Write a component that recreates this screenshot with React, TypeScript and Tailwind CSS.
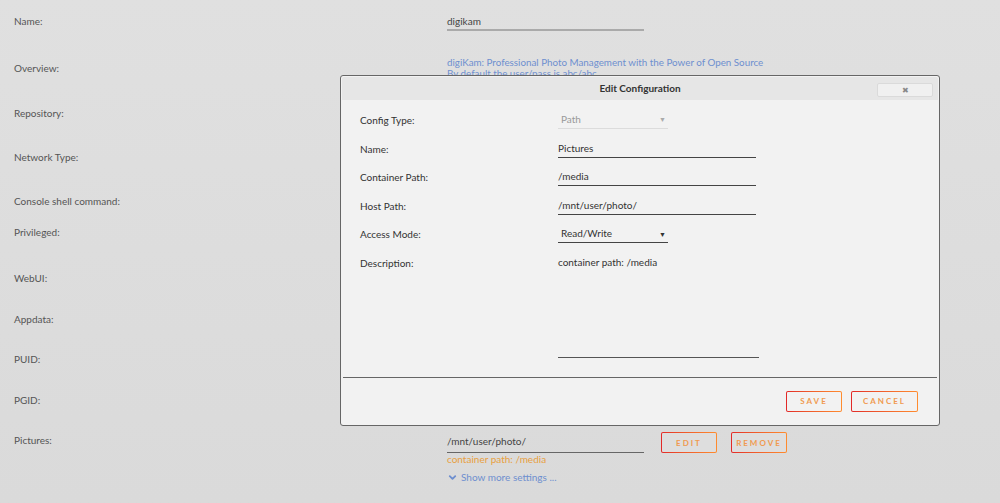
import { ChevronDown } from 'lucide-react';

const font = { fontFamily: 'Lato, "Liberation Sans", sans-serif' };

const rows: { label: string; h: string }[] = [
  { label: 'Repository:', h: 'h-[44px]' },
  { label: 'Network Type:', h: 'h-[44px]' },
  { label: 'Console shell command:', h: 'h-[31px]' },
  { label: 'Privileged:', h: 'h-[46px]' },
  { label: 'WebUI:', h: 'h-[41px]' },
  { label: 'Appdata:', h: 'h-[40px]' },
  { label: 'PUID:', h: 'h-[41px]' },
  { label: 'PGID:', h: 'h-[40px]' },
];

function OutlineButton({ label, width, bg }: { label: string; width: string; bg: string }) {
  return (
    <div
      className={`p-px rounded-[2px] bg-linear-to-r from-[#e22828] to-[#ff8c2f] ${width} h-[21px]`}
    >
      <div className={`w-full h-full flex items-center justify-center rounded-[1px] ${bg}`}>
        <span className="text-[8px] font-bold tracking-[2px] text-[#f09a50]">{label}</span>
      </div>
    </div>
  );
}

function ModalRow({ label, children }: { label: string; children: React.ReactNode }) {
  return (
    <div className="flex h-[28.6px]">
      <div className="w-[198px] pt-[2px] text-[10px] text-[#333]">{label}</div>
      <div className="flex-1">{children}</div>
    </div>
  );
}

function TextInput({ value }: { value: string }) {
  return (
    <div className="w-[198px] h-[18px] border-b border-[#444] text-[10px] text-[#333] leading-[16px]">
      {value}
    </div>
  );
}

function Select({ value, disabled }: { value: string; disabled?: boolean }) {
  return (
    <div
      className={`w-[110px] h-[18px] flex items-center justify-between pl-[3px] pr-[2px] border-b text-[10px] ${
        disabled ? 'border-[#dcdcdc] text-[#999]' : 'border-[#444] text-[#333]'
      }`}
    >
      <span>{value}</span>
      <span className={`text-[7px] ${disabled ? 'text-[#aaa]' : 'text-[#333]'}`}>▼</span>
    </div>
  );
}

export default function App() {
  return (
    <div
      style={font}
      className="relative w-[1000px] h-[503px] overflow-hidden bg-linear-to-b from-[#e0e0e0] to-[#dadada] text-[#555]"
    >
      {/* Page form */}
      <div className="pt-[14px] pl-[14px] text-[10px]">
        <div className="flex h-[47px]">
          <div className="w-[433px]">Name:</div>
          <div>
            <div className="w-[197px] h-[17px] border-b-2 border-[#aaa] text-[#444]">digikam</div>
          </div>
        </div>
        <div className="flex h-[45px]">
          <div className="w-[433px]">Overview:</div>
          <div className="-mt-[4px] text-[9.8px] text-[#6e8fcf] leading-[11px]">
            <div>digiKam: Professional Photo Management with the Power of Open Source</div>
            <div>By default the user/pass is abc/abc</div>
          </div>
        </div>
        {rows.map((r) => (
          <div key={r.label} className={`flex ${r.h}`}>
            <div className="w-[433px]">{r.label}</div>
          </div>
        ))}
        <div className="flex">
          <div className="w-[433px]">Pictures:</div>
          <div>
            <div className="flex items-start">
              <div className="w-[197px] h-[20px] pt-[1px] border-b border-[#666] text-[#444] leading-[14px]">
                /mnt/user/photo/
              </div>
              <div className="flex gap-[14px] ml-[17px] -mt-[1px]">
                <OutlineButton label="EDIT" width="w-[56px]" bg="bg-[#dedede]" />
                <OutlineButton label="REMOVE" width="w-[56px]" bg="bg-[#dedede]" />
              </div>
            </div>
            <div className="text-[#e8a040] leading-[13px]">container path: /media</div>
            <div className="mt-[4px] flex items-center gap-[3px] text-[#6e8fcf]">
              <ChevronDown size={11} strokeWidth={4} className="text-[#6e8fcf]" />
              <span>Show more settings ...</span>
            </div>
          </div>
        </div>
      </div>

      {/* Modal */}
      <div className="absolute left-[340px] top-[75px] w-[600px] h-[351px] bg-[#f2f2f2] border border-[#666] rounded-[3px] p-[1px] flex flex-col">
        <div className="relative h-[23px] rounded-t-[2px] bg-[#e6e6e6] flex items-center justify-center">
          <span className="text-[10px] font-bold text-[#333]">Edit Configuration</span>
          <div className="absolute right-[5px] top-[6px] w-[56px] h-[14px] rounded-[2px] border border-[#dadada] bg-[#f0f0f0] flex items-center justify-center">
            <span className="text-[8px] text-[#888] leading-none">✖</span>
          </div>
        </div>
        <div className="pl-[18px] pt-[11px] flex-1">
          <ModalRow label="Config Type:">
            <Select value="Path" disabled />
          </ModalRow>
          <ModalRow label="Name:">
            <TextInput value="Pictures" />
          </ModalRow>
          <ModalRow label="Container Path:">
            <TextInput value="/media" />
          </ModalRow>
          <ModalRow label="Host Path:">
            <TextInput value="/mnt/user/photo/" />
          </ModalRow>
          <ModalRow label="Access Mode:">
            <Select value="Read/Write" />
          </ModalRow>
          <div className="flex">
            <div className="w-[198px] pt-[2px] text-[10px] text-[#333]">Description:</div>
            <div className="w-[201px] h-[104px] border-b border-[#555] text-[10px] text-[#333] pt-[1px]">
              container path: /media
            </div>
          </div>
        </div>
        <div className="mx-[1px] border-t border-[#666] h-[47px] flex items-center justify-end gap-[9px] pr-[19px]">
          <OutlineButton label="SAVE" width="w-[56px]" bg="bg-[#f2f2f2]" />
          <OutlineButton label="CANCEL" width="w-[67px]" bg="bg-[#f2f2f2]" />
        </div>
      </div>
    </div>
  );
}
